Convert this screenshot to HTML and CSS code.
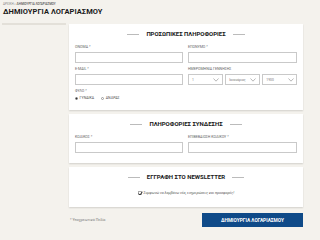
FILE: index.html
```html
<!DOCTYPE html>
<html lang="el">
<head>
<meta charset="utf-8">
<link rel="stylesheet" href="styles.css">
</head>
<body>
<div class="page">
  <div class="crumbs">ΑΡΧΙΚΗ &gt; <b>ΔΗΜΙΟΥΡΓΙΑ ΛΟΓΑΡΙΑΣΜΟΥ</b></div>
  <h1 class="title">ΔΗΜΙΟΥΡΓΙΑ ΛΟΓΑΡΙΑΣΜΟΥ</h1>
  <div class="layout">
    <aside class="side"><div class="side-bar"></div></aside>
    <main class="main">
      <section class="card">
        <h2 class="card-head"><span class="rule"></span>ΠΡΟΣΩΠΙΚΕΣ ΠΛΗΡΟΦΟΡΙΕΣ<span class="rule"></span></h2>
        <div class="grid">
          <div class="field"><label class="lbl">ΟΝΟΜΑ *</label><div class="input"></div></div>
          <div class="field"><label class="lbl">ΕΠΩΝΥΜΟ *</label><div class="input"></div></div>
          <div class="field"><label class="lbl">E-MAIL *</label><div class="input"></div></div>
          <div class="field"><label class="lbl">ΗΜΕΡΟΜΗΝΙΑ ΓΕΝΝΗΣΗΣ</label>
            <div class="selects">
              <div class="select"><span>1</span><svg width="6" height="4" viewBox="0 0 6 4"><polyline points="0.5,0.5 3,3.2 5.5,0.5" fill="none" stroke="#888" stroke-width="0.6"/></svg></div>
              <div class="select"><span>Ιανουάριος</span><svg width="6" height="4" viewBox="0 0 6 4"><polyline points="0.5,0.5 3,3.2 5.5,0.5" fill="none" stroke="#888" stroke-width="0.6"/></svg></div>
              <div class="select"><span>1900</span><svg width="6" height="4" viewBox="0 0 6 4"><polyline points="0.5,0.5 3,3.2 5.5,0.5" fill="none" stroke="#888" stroke-width="0.6"/></svg></div>
            </div>
          </div>
          <div class="field"><label class="lbl">ΦΥΛΟ *</label>
            <div class="radios">
              <span class="radio on"></span><span class="rtext">ΓΥΝΑΙΚΑ</span>
              <span class="radio"></span><span class="rtext">ΑΝΔΡΑΣ</span>
            </div>
          </div>
        </div>
      </section>
      <section class="card">
        <h2 class="card-head"><span class="rule"></span>ΠΛΗΡΟΦΟΡΙΕΣ ΣΥΝΔΕΣΗΣ<span class="rule"></span></h2>
        <div class="grid">
          <div class="field"><label class="lbl">ΚΩΔΙΚΟΣ *</label><div class="input"></div></div>
          <div class="field"><label class="lbl">ΕΠΙΒΕΒΑΙΩΣΗ ΚΩΔΙΚΟΥ *</label><div class="input"></div></div>
        </div>
      </section>
      <section class="card news">
        <h2 class="card-head"><span class="rule"></span>ΕΓΓΡΑΦΗ ΣΤΟ NEWSLETTER<span class="rule"></span></h2>
        <div class="check-row">
          <span class="check"><svg width="5" height="5" viewBox="0 0 5 5"><polyline points="0.8,2.6 2,3.9 4.4,0.8" fill="none" stroke="#111" stroke-width="0.9"/></svg></span>
          <span class="check-text">Συμφωνώ να λαμβάνω νέα, ενημερώσεις και προσφορές!</span>
        </div>
      </section>
      <div class="footer">
        <span class="req">* Υποχρεωτικά Πεδία</span>
        <button class="btn">ΔΗΜΙΟΥΡΓΙΑ ΛΟΓΑΡΙΑΣΜΟΥ</button>
      </div>
    </main>
  </div>
</div>
</body>
</html>
```
FILE: styles.css
```css
html, body {
  margin: 0;
  padding: 0;
  background: #f4f2ed;
  font-family: Roboto, "Liberation Sans", sans-serif;
  color: #222;
}
.page {
  width: 320px;
  height: 240px;
  overflow: hidden;
  padding: 2px 0 0 0;
  box-sizing: border-box;
}
.crumbs {
  font-size: 3px;
  line-height: 4px;
  color: #888;
  padding-left: 3px;
}
.crumbs b { color: #555; font-weight: 500; }
.title {
  margin: 2px 0 0 3px;
  font-size: 7.5px;
  line-height: 8px;
  font-weight: 700;
  color: #1a1a1a;
  letter-spacing: 0.05px;
}
.layout {
  display: grid;
  grid-template-columns: 66px 234px;
  column-gap: 3px;
  margin-top: 8px;
}
.side { padding: 0 0 0 2px; }
.side-bar { height: 2px; background: #e3e0d9; margin-top: -1px; }
.main { display: flex; flex-direction: column; gap: 4px; }
.card {
  background: #fff;
  box-shadow: 0 1px 1.5px rgba(0,0,0,0.14);
  padding: 7px 6px 10px 6px;
}
.card-head {
  margin: 0 0 8px 0;
  display: flex;
  justify-content: center;
  align-items: center;
  gap: 7px;
  font-size: 6px;
  line-height: 6px;
  font-weight: 700;
  color: #1a1a1a;
}
.rule { width: 12px; height: 0.5px; background: #bbb; }
.grid {
  display: grid;
  grid-template-columns: 108px 109px;
  column-gap: 5px;
  row-gap: 4px;
}
.field { display: flex; flex-direction: column; }
.lbl {
  font-size: 3.6px;
  line-height: 4px;
  color: #666;
  margin-bottom: 3px;
}
.input {
  height: 11px;
  border: 0.6px solid #c9c9c9;
  box-sizing: border-box;
}
.selects { display: flex; gap: 2.5px; }
.select {
  flex: 1;
  height: 11px;
  border: 0.6px solid #c9c9c9;
  box-sizing: border-box;
  display: flex;
  align-items: center;
  justify-content: space-between;
  padding: 0 2.5px 0 3px;
  font-size: 3.3px;
  color: #777;
}
.radios { display: flex; align-items: center; height: 4px; }
.radio {
  width: 3px; height: 3px;
  border: 0.5px solid #999;
  border-radius: 50%;
  box-sizing: border-box;
  margin-right: 1.5px;
}
.radio.on { background: radial-gradient(circle, #333 45%, #fff 55%); border-color: #666; }
.rtext { font-size: 3.6px; color: #555; margin-right: 7px; }
.news { padding-bottom: 11px; }
.news .card-head { margin-bottom: 10px; }
.check-row { display: flex; justify-content: center; align-items: center; gap: 1.5px; height: 6px; }
.check {
  width: 4px; height: 4px;
  border: 0.5px solid #aaa;
  box-sizing: border-box;
  position: relative;
}
.check svg { position: absolute; left: -0.5px; top: -1.5px; }
.check-text { font-size: 3.6px; font-style: italic; color: #555; }
.footer {
  display: flex;
  justify-content: space-between;
  align-items: center;
  margin-top: 2px;
  padding-left: 1px;
}
.req { font-size: 3.6px; color: #777; }
.btn {
  width: 101px;
  height: 14px;
  border: 0;
  margin: 0;
  padding: 0;
  background: #0f4a88;
  color: #fff;
  font-family: Roboto, "Liberation Sans", sans-serif;
  font-size: 4.8px;
  font-weight: 700;
}
```
